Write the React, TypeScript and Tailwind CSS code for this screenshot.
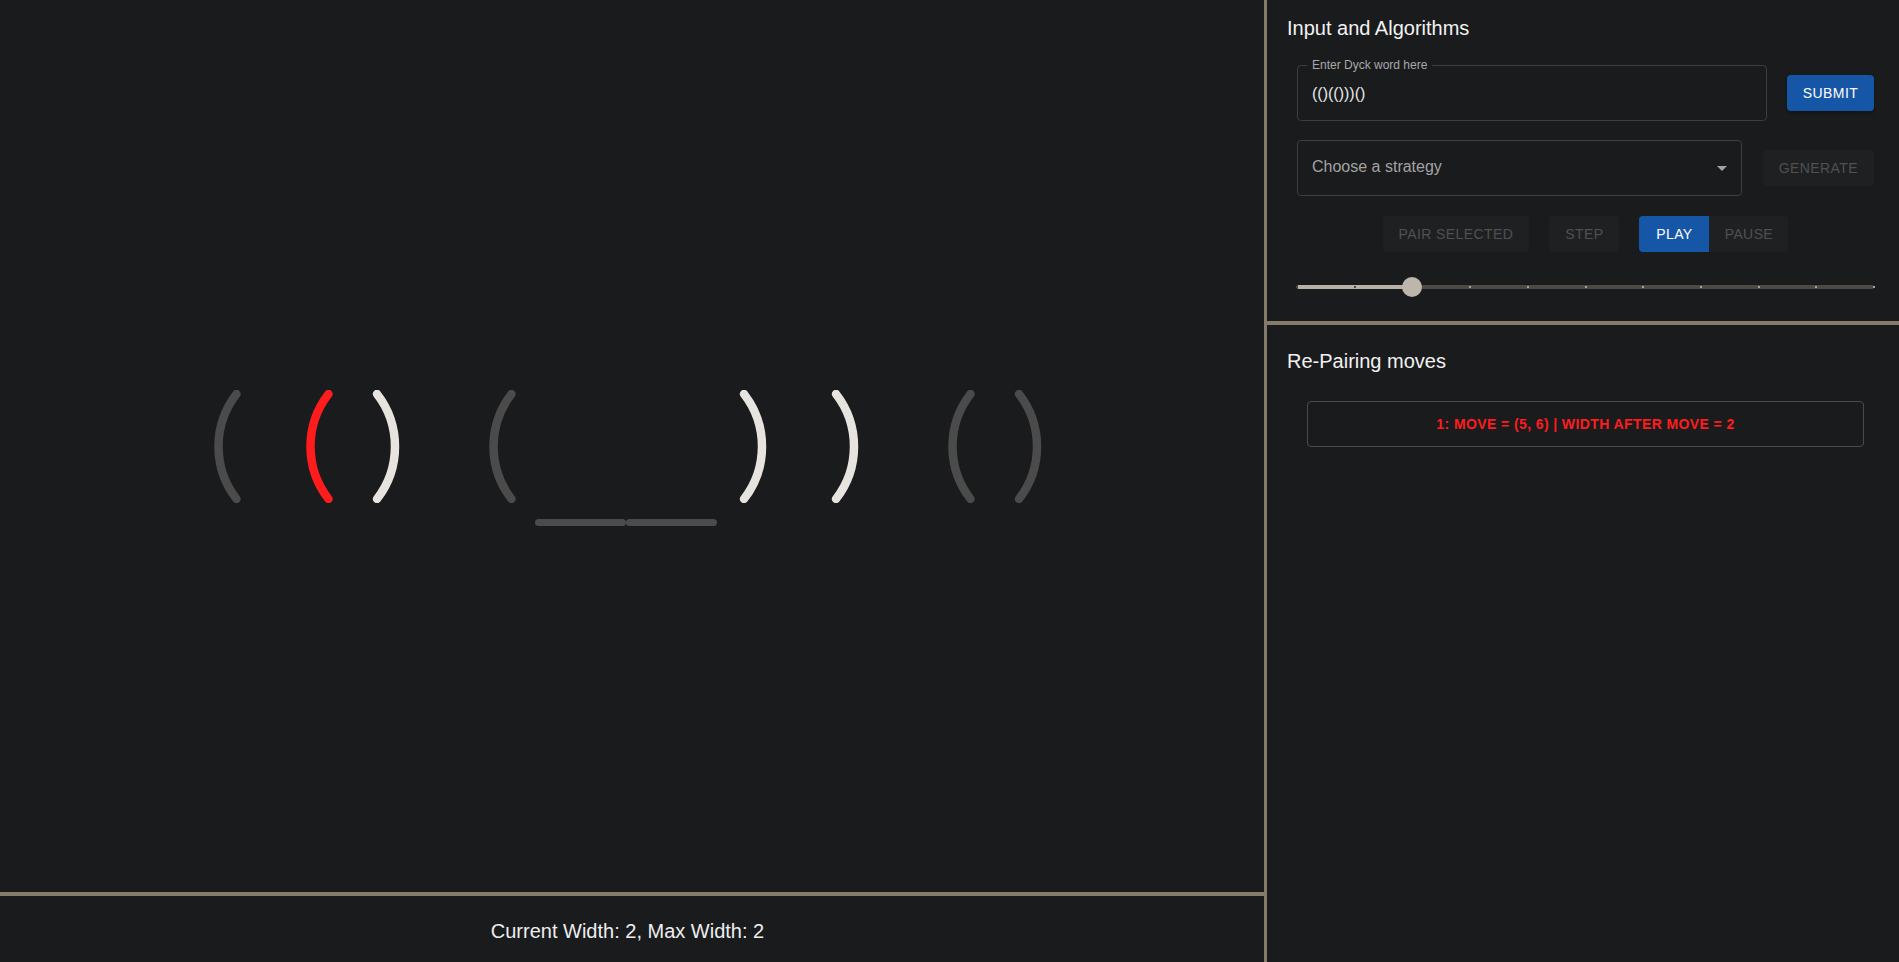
import { useState } from 'react';

type Tone = 'gray' | 'red' | 'white' | 'gone';

const WORD = '(()(()))()';
const TONES: Tone[] = ['gray', 'red', 'white', 'gray', 'gone', 'gone', 'white', 'white', 'gray', 'gray'];

function Paren({ ch, tone }: { ch: string; tone: Tone }) {
  const stroke = tone === 'red' ? '#ff1c1c' : tone === 'white' ? '#e7e4e0' : '#4b4b4b';

  return (
    <div className="relative h-[113px] w-[91.7px] shrink-0">
      {tone === 'gone' ? (
        // removed pair leaves a placeholder bar under the slot
        <div className="absolute left-0 top-[129px] h-[7px] w-[91px] rounded-full bg-[#4b4b4b]" />
      ) : (
        <svg width="92" height="113" viewBox="0 0 92 113" className="block">
          <path
            d={ch === '(' ? 'M68.5 4A85.6 85.6 0 0 0 68.5 109' : 'M26 4A85.6 85.6 0 0 1 26 109'}
            fill="none"
            stroke={stroke}
            strokeWidth={8.5}
            strokeLinecap="round"
          />
        </svg>
      )}
    </div>
  );
}

function MutedButton({ label }: { label: string }) {
  return (
    <button className="h-[36px] rounded-[4px] bg-[#1f2022] px-4 text-[14px] font-medium uppercase leading-[24px] tracking-[0.4px] text-[#4f5052]">
      {label}
    </button>
  );
}

function SpeedSlider() {
  const [value] = useState(2);
  const marks = Array.from({ length: 11 }, (_, i) => i);

  return (
    <div className="relative flex h-[20px] w-full items-center">
      <div className="h-[4px] w-full rounded-full bg-[#4b4a47]" />
      <div className="absolute left-0 h-[4px] rounded-full bg-[#b8b1a6]" style={{ width: `${value * 10}%` }} />
      {marks.map((m) => (
        <span
          key={m}
          className={`absolute h-[2px] w-[2px] -translate-x-1/2 ${m < value ? 'bg-[#4b4a47]' : 'bg-[#a9a297]'}`}
          style={{ left: `${m * 10}%` }}
        />
      ))}
      <span
        className="absolute h-[20px] w-[20px] -translate-x-1/2 rounded-full bg-[#bdb6aa]"
        style={{ left: `${value * 10}%` }}
      />
    </div>
  );
}

export default function App() {
  return (
    <div className="flex h-screen w-full overflow-hidden bg-[#1a1b1d] font-['Liberation_Sans',Arial,sans-serif] text-[#ecebea]">
      {/* Left: word canvas + width readout */}
      <div className="flex w-[1264px] shrink-0 flex-col">
        <div className="flex flex-1 items-center pl-[168px]">
          {WORD.split('').map((ch, i) => (
            <Paren key={i} ch={ch} tone={TONES[i]} />
          ))}
        </div>
        <div className="h-[4px] bg-[#857b6b]" />
        <div className="flex h-[66px] items-start justify-center pr-[9px] pt-[19px] text-[20px] leading-[32px] text-[#eeeeee]">
          Current Width: 2, Max Width: 2
        </div>
      </div>

      <div className="w-[3px] shrink-0 bg-[#857b6b]" />

      {/* Right: controls */}
      <div className="flex flex-1 flex-col">
        <div className="flex h-[321px] flex-col pt-[12px]">
          <h2 className="pl-[20px] text-[20px] font-normal leading-[32px] text-[#f2f2f2]">Input and Algorithms</h2>

          <div className="flex flex-col pl-[30px] pr-[25px]">
            <div className="mt-[21px] flex items-center gap-[20px]">
              <div className="relative flex h-[56px] flex-1 items-center rounded-[4px] border border-[#3d3e40] px-[14px]">
                <span className="absolute left-[9px] top-[-9px] bg-[#1a1b1d] px-[5px] text-[12px] leading-[16px] text-[#a9a9a9]">
                  Enter Dyck word here
                </span>
                <input
                  readOnly
                  value="(()(()))()"
                  className="w-full bg-transparent text-[16px] leading-[23px] text-[#e8e8e8] outline-none"
                />
              </div>
              <button className="h-[36px] w-[87px] rounded-[4px] bg-[#1656a6] text-[14px] font-medium uppercase leading-[24px] tracking-[0.4px] text-white shadow-[0_2px_3px_rgba(0,0,0,0.35)]">
                Submit
              </button>
            </div>

            <div className="mt-[19px] flex items-center gap-[21px]">
              <div className="flex h-[56px] flex-1 items-center justify-between rounded-[4px] border border-[#3d3e40] pl-[14px] pr-[7px]">
                <span className="pb-[3px] text-[16px] leading-[23px] text-[#a3a3a3]">Choose a strategy</span>
                <svg width="24" height="24" viewBox="0 0 24 24" className="text-[#a3a3a3]">
                  <path d="M7 10l5 5 5-5z" fill="currentColor" />
                </svg>
              </div>
              <MutedButton label="Generate" />
            </div>

            <div className="mt-[20px] flex items-center justify-center gap-[20px]">
              <MutedButton label="Pair selected" />
              <MutedButton label="Step" />
              <div className="flex">
                <button className="h-[36px] w-[70px] rounded-l-[4px] bg-[#1656a6] text-[14px] font-medium uppercase leading-[24px] tracking-[0.4px] text-white">
                  Play
                </button>
                <button className="h-[36px] w-[79px] rounded-r-[4px] bg-[#1f2022] text-[14px] font-medium uppercase leading-[24px] tracking-[0.4px] text-[#4f5052]">
                  Pause
                </button>
              </div>
            </div>

            <div className="mt-[25px]">
              <SpeedSlider />
            </div>
          </div>
        </div>

        <div className="h-[4px] bg-[#857b6b]" />

        <div className="flex flex-col pt-[20px]">
          <h2 className="pl-[20px] text-[20px] font-normal leading-[32px] text-[#f2f2f2]">Re-Pairing moves</h2>
          <div className="mt-[24px] pl-[40px] pr-[35px]">
            <div className="flex h-[46px] items-center justify-center rounded-[4px] border border-[#4a4b4d] text-[14px] font-bold uppercase tracking-[0.4px] text-[#ff1c1c]">
              1: Move = (5, 6) | Width after move = 2
            </div>
          </div>
        </div>
      </div>
    </div>
  );
}
